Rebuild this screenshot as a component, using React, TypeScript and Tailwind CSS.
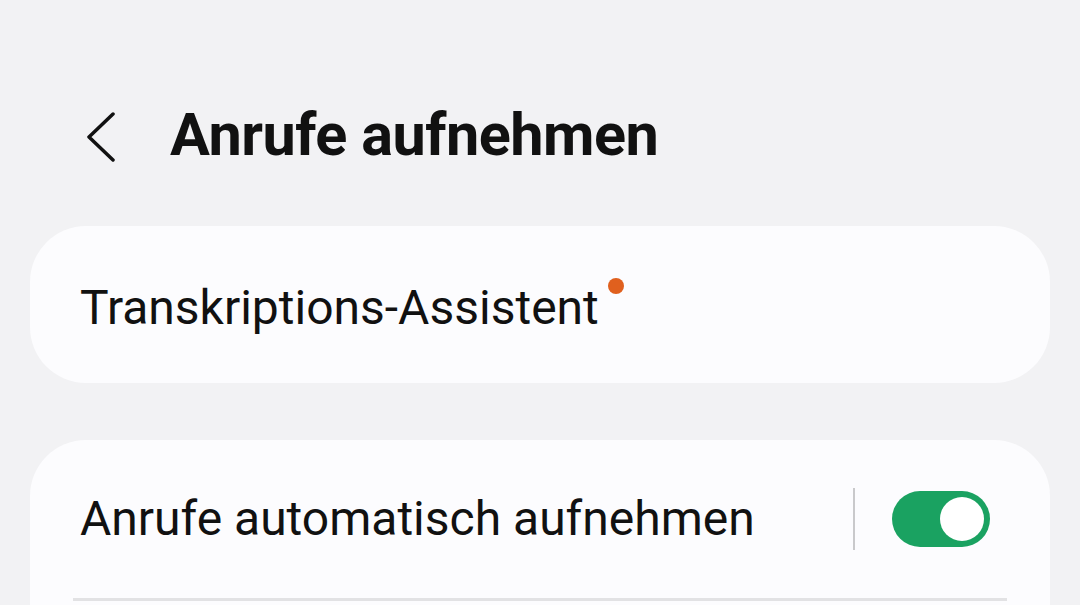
export default function App() {
  return (
    <div className="w-[1080px] h-[605px] overflow-hidden bg-[#f2f2f4] flex flex-col" style={{ fontFamily: "Roboto, 'Noto Sans', sans-serif" }}>
      <div className="h-[226px] flex items-center pl-[82px] pt-[46px]">
        <svg width="36" height="52" viewBox="0 0 36 52" className="shrink-0">
          <path d="M31 4 L7 27 L31 50" fill="none" stroke="#111" strokeWidth="3.5" strokeLinecap="round" strokeLinejoin="round" />
        </svg>
        <h1 className="ml-[52px] text-[59.4px] font-bold text-[#111] tracking-[-0.5px] leading-none">Anrufe aufnehmen</h1>
      </div>
      <div className="mx-[30px] h-[157px] rounded-[56px] bg-[#fcfcfe] flex items-center pl-[50px] pt-[6px]">
        <span className="relative text-[48px] text-[#111] leading-none">
          Transkriptions-Assistent
          <span className="absolute -right-[25px] top-[-6px] w-[16px] h-[16px] rounded-full bg-[#e0601e]" />
        </span>
      </div>
      <div className="mx-[30px] mt-[57px] flex-1 rounded-t-[56px] bg-[#fcfcfe] flex flex-col">
        <div className="h-[158px] flex items-center pl-[50px] pr-[60px]">
          <span className="flex-1 text-[48px] text-[#111] leading-none">Anrufe automatisch aufnehmen</span>
          <div className="w-[2px] h-[62px] bg-[#c9c9cb] mr-[37px]" />
          <div className="w-[98px] h-[56px] rounded-full bg-[#1aa261] flex items-center justify-end pr-[6px]">
            <div className="w-[44px] h-[44px] rounded-full bg-white" />
          </div>
        </div>
        <div className="mx-[43px] h-[3px] bg-[#e2e2e4]" />
      </div>
    </div>
  );
}
